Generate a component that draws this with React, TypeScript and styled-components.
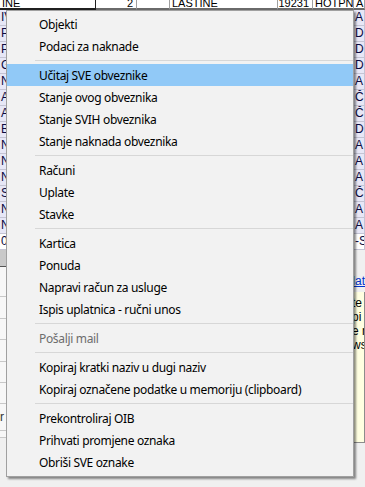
import React from "react"
import styled, { createGlobalStyle } from "styled-components"

const GlobalStyle = createGlobalStyle`
  html, body {
    margin: 0;
    padding: 0;
    background: #f0f0f0;
  }
`

const Screen = styled.div`
  position: relative;
  width: 365px;
  height: 487px;
  overflow: hidden;
  background: #f0f0f0;
  font-family: "Liberation Sans", Arial, sans-serif;
`

const Table = styled.div`
  display: grid;
  grid-template-columns: 96px 41px 33px 108px 35px 41px 1fr;
  background: #ffffff;
`

const TopCell = styled.div<{ $right?: boolean; $focus?: boolean }>`
  height: 8px;
  overflow: hidden;
  display: flex;
  align-items: flex-end;
  justify-content: ${({ $right }) => ($right ? "flex-end" : "flex-start")};
  padding: 0 3px 0 2px;
  font-size: 11px;
  line-height: 10px;
  color: #000;
  background: #fff;
  border-right: 1px solid ${({ $focus }) => ($focus ? "#202020" : "#a0a0a0")};
  border-bottom: 2px solid ${({ $focus }) => ($focus ? "#202020" : "#6a6a6a")};
  white-space: nowrap;
`

const Cell = styled.div<{ $alt?: boolean }>`
  height: 15px;
  overflow: hidden;
  padding: 0 0 0 1px;
  font-size: 12px;
  line-height: 14px;
  color: #0a0a40;
  white-space: nowrap;
  background: ${({ $alt }) => ($alt ? "#ffffff" : "#e7e7f6")};
  border-right: 1px solid #c4c4d4;
  border-bottom: 1px solid #c4c4d4;
`

const Lower = styled.div`
  display: flex;
  justify-content: space-between;
  height: 247px;
`

const FormCol = styled.div`
  width: 60px;
  display: flex;
  flex-direction: column;
`

const GreyBar = styled.div`
  height: 16px;
  background: #c9c9c9;
  border-bottom: 1px solid #555;
`

const FieldLine = styled.div<{ $h: number }>`
  height: ${({ $h }) => $h}px;
  border-bottom: 1px solid #c8c8c8;
  background: #f7f7f7;
  font-size: 12px;
  color: #333;
  line-height: ${({ $h }) => $h}px;
`

const NoteCol = styled.div`
  width: 70px;
  display: flex;
  flex-direction: column;
`

const LinkRow = styled.div`
  height: 38px;
  display: flex;
  align-items: flex-end;
  justify-content: flex-end;
  font-size: 12px;
  color: #0033cc;
  text-decoration: underline;
  white-space: nowrap;
`

const Note = styled.div`
  margin-top: 4px;
  height: 146px;
  background: #ffffe1;
  border-right: 1px solid #8c8c8c;
  border-bottom: 1px solid #8c8c8c;
  padding: 4px 0 0 57px;
  font-size: 12px;
  line-height: 14px;
  color: #000;
  white-space: nowrap;
  overflow: hidden;
`

const Menu = styled.div`
  position: absolute;
  left: 6px;
  top: 10px;
  width: 346px;
  padding: 2px 0 3px;
  background: #f2f2f2;
  border: 1px solid #a0a0a0;
  box-shadow: 2px 2px 2px rgba(0, 0, 0, 0.45);
  font-family: "Segoe UI", "Noto Sans", sans-serif;
  font-size: 12px;
  color: #000;
`

const Item = styled.div<{ $active?: boolean; $disabled?: boolean }>`
  height: 22px;
  display: flex;
  align-items: center;
  padding-left: 32px;
  letter-spacing: -0.33px;
  white-space: nowrap;
  background: ${({ $active }) => ($active ? "#91c9f7" : "transparent")};
  color: ${({ $disabled }) => ($disabled ? "#6d6d6d" : "#000")};
`

const Separator = styled.div`
  height: 7px;
  display: flex;
  align-items: center;
  padding-left: 28px;

  &::after {
    content: "";
    flex: 1;
    height: 1px;
    background: #d7d7d7;
  }
`

const rows: [string, string][] = [
  ["IVIĆ", "A S"],
  ["PAVIĆ", "D"],
  ["PAVLIĆ", "D"],
  ["GRGIĆ", "D"],
  ["NOVAK", "A S"],
  ["ANIĆ", "Č"],
  ["ANTIĆ", "Č"],
  ["BABIĆ", "D"],
  ["NIKOLIĆ", "A S"],
  ["NOVAK", "A S"],
  ["NIŽIĆ", "A S"],
  ["SABOL", "Č"],
  ["NOVOSEL", "A S"],
  ["NOVAK", "A S"],
  ["0", "-S"],
]

type Entry = { label?: string; active?: boolean; disabled?: boolean; sep?: boolean }

const menu: Entry[] = [
  { label: "Objekti" },
  { label: "Podaci za naknade" },
  { sep: true },
  { label: "Učitaj SVE obveznike", active: true },
  { label: "Stanje ovog obveznika" },
  { label: "Stanje SVIH obveznika" },
  { label: "Stanje naknada obveznika" },
  { sep: true },
  { label: "Računi" },
  { label: "Uplate" },
  { label: "Stavke" },
  { sep: true },
  { label: "Kartica" },
  { label: "Ponuda" },
  { label: "Napravi račun za usluge" },
  { label: "Ispis uplatnica - ručni unos" },
  { sep: true },
  { label: "Pošalji mail", disabled: true },
  { sep: true },
  { label: "Kopiraj kratki naziv u dugi naziv" },
  { label: "Kopiraj označene podatke u memoriju (clipboard)" },
  { sep: true },
  { label: "Prekontroliraj OIB" },
  { label: "Prihvati promjene oznaka" },
  { label: "Obriši SVE oznake" },
]

const App = () => {
  return (
    <Screen>
      <GlobalStyle />
      <Table>
        <TopCell $focus>INE</TopCell>
        <TopCell $right>2</TopCell>
        <TopCell />
        <TopCell>LASTINE</TopCell>
        <TopCell $right>19231</TopCell>
        <TopCell>HOTPNA</TopCell>
        <TopCell>A</TopCell>
        {rows.map(([first, last], i) => (
          <React.Fragment key={i}>
            <Cell $alt={i === 14}>{first}</Cell>
            <Cell $alt={i === 14} />
            <Cell $alt={i === 14} />
            <Cell $alt={i === 14} />
            <Cell $alt={i === 14} />
            <Cell $alt={i === 14} />
            <Cell $alt={i === 14}>{last}</Cell>
          </React.Fragment>
        ))}
      </Table>
      <Lower>
        <FormCol>
          <GreyBar />
          <FieldLine $h={29} />
          <FieldLine $h={21} />
          <FieldLine $h={20} />
          <FieldLine $h={21} />
          <FieldLine $h={20} />
          <FieldLine $h={20} />
          <FieldLine $h={26}>r</FieldLine>
          <FieldLine $h={6} />
        </FormCol>
        <NoteCol>
          <LinkRow>Dodat</LinkRow>
          <Note>
            te
            <br />
            pi
            <br />
            e n
            <br />
            ws
          </Note>
        </NoteCol>
      </Lower>
      <Menu>
        {menu.map((m, i) =>
          m.sep ? (
            <Separator key={i} />
          ) : (
            <Item key={i} $active={m.active} $disabled={m.disabled}>
              {m.label}
            </Item>
          )
        )}
      </Menu>
    </Screen>
  )
}

export default App
